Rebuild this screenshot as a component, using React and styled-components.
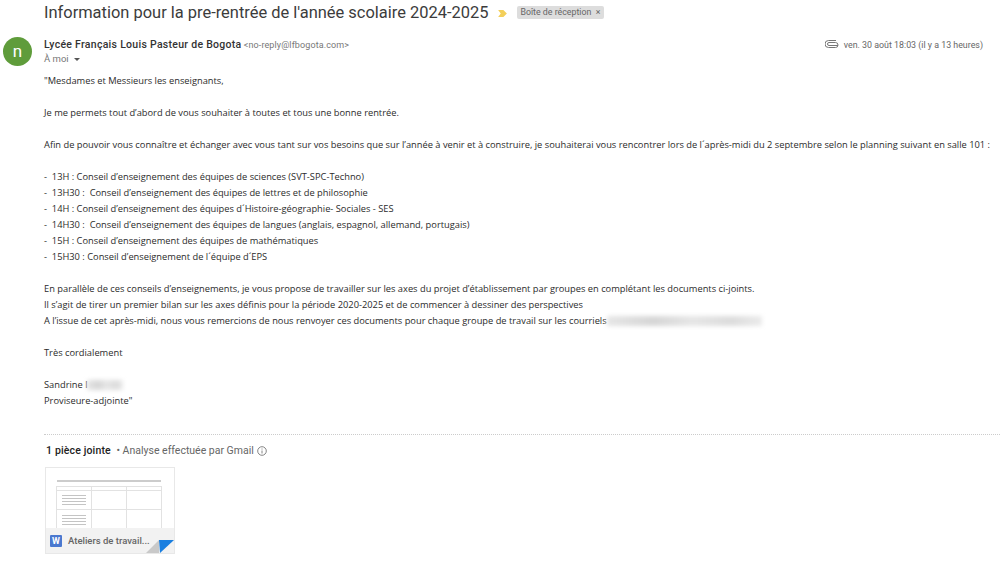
import React from 'react';
import styled, { createGlobalStyle } from 'styled-components';

const GlobalStyle = createGlobalStyle`
  html, body {
    margin: 0;
    padding: 0;
    background: #fff;
    overflow: hidden;
  }
`;

const Page = styled.div`
  width: 1000px;
  height: 566px;
  overflow: hidden;
  font-family: "Open Sans", sans-serif;
  color: #222;
`;

const SubjectRow = styled.div`
  display: flex;
  align-items: center;
  height: 24px;
  padding: 1px 0 0 44px;
`;

const Subject = styled.h1`
  margin: 0;
  font: 400 16.45px/24px Roboto, sans-serif;
  color: #3c3c3c;
`;

const Marker = styled.svg`
  width: 9px;
  height: 7px;
  margin-left: 10px;
`;

const Label = styled.span`
  display: flex;
  align-items: center;
  justify-content: space-between;
  box-sizing: border-box;
  width: 87px;
  height: 13px;
  margin: -2px 0 0 10px;
  padding: 0 4px 0 3px;
  border-radius: 2px;
  background: #dddddd;
  color: #666;
  white-space: nowrap;
  font: 400 8.8px/13px Roboto, sans-serif;
`;

const Header = styled.div`
  display: flex;
  height: 34px;
  margin-top: 11px;
  padding-left: 3px;
`;

const Avatar = styled.div`
  display: flex;
  align-items: center;
  justify-content: center;
  flex: none;
  width: 29px;
  height: 29px;
  margin-top: 1px;
  border-radius: 50%;
  background: #5f9c3b;
  color: #fff;
  font: 400 17px/29px Roboto, sans-serif;
`;

const SenderBlock = styled.div`
  margin-left: 12px;
  flex: 1;
`;

const SenderLine = styled.div`
  height: 15px;
  margin-top: 1px;
  font: 400 9px/15px Roboto, sans-serif;
  letter-spacing: 0.1px;
  color: #777;
`;

const SenderName = styled.strong`
  font: 500 10.5px/15px Roboto, sans-serif;
  letter-spacing: 0.28px;
  color: #333;
`;

const Recipient = styled.div`
  display: flex;
  align-items: center;
  gap: 5px;
  height: 14px;
  font: 400 9.5px/14px Roboto, sans-serif;
  color: #777;
`;

const Caret = styled.span`
  width: 0;
  height: 0;
  border-left: 3px solid transparent;
  border-right: 3px solid transparent;
  border-top: 3px solid #555;
`;

const Meta = styled.div`
  display: flex;
  align-items: center;
  gap: 5px;
  height: 15px;
  margin-top: 2px;
  padding-right: 17px;
  font: 400 8.85px/15px Roboto, sans-serif;
  color: #666;
`;

const Clip = styled.svg`
  width: 14px;
  height: 8px;
  margin-top: -4px;
`;

const Body = styled.div`
  padding-left: 44px;
  margin-top: 3px;
  font-size: 9.3px;
  line-height: 16px;
  color: #2b2b2b;
  white-space: pre;
`;

const Line = styled.div`
  display: flex;
  align-items: center;
  height: 16px;
  margin-top: ${(p) => (p.$gap ? '16px' : '0')};
`;

const Blur = styled.span`
  display: inline-block;
  width: ${(p) => p.$w}px;
  height: 10px;
  background: linear-gradient(90deg, #e6e6e6, #d6d6d6 30%, #e6e6e6 55%, #dcdcdc 80%, #ebebeb);
  filter: blur(2px);
`;

const Attachments = styled.section`
  margin: 25px 0 0 44px;
  border-top: 1px dotted #ccc;
`;

const AttachTitle = styled.div`
  display: flex;
  align-items: center;
  gap: 3px;
  height: 16px;
  margin-top: 8px;
  padding-left: 2px;
  font: 400 10.5px/16px Roboto, sans-serif;
  color: #666;
`;

const AttachCount = styled.strong`
  font-weight: 500;
  letter-spacing: 0.15px;
  color: #222;
`;

const Card = styled.div`
  position: relative;
  box-sizing: border-box;
  width: 130px;
  height: 87px;
  margin: 8px 0 0 1px;
  border: 1px solid #e8e8e8;
  background: #fff;
  overflow: hidden;
`;

const DocHeading = styled.div`
  margin: 12px 0 0 11px;
  width: 104px;
  height: 2px;
  background: #999;
  opacity: 0.5;
`;

const DocTable = styled.div`
  display: grid;
  grid-template-columns: 35px 35px 35px;
  grid-template-rows: 4px 19px 20px;
  width: 105px;
  margin: 4px 0 0 10px;
  border-top: 1px solid #e2e2e2;
  border-left: 1px solid #e2e2e2;
`;

const DocCell = styled.div`
  display: flex;
  flex-direction: column;
  align-items: center;
  justify-content: center;
  gap: 2px;
  box-sizing: border-box;
  border-right: 1px solid #e2e2e2;
  border-bottom: 1px solid #e2e2e2;
`;

const DocText = styled.span`
  display: block;
  width: 24px;
  height: 1px;
  background: #c4c4c4;
`;

const CardFooter = styled.div`
  position: absolute;
  left: 0;
  right: 0;
  bottom: 0;
  display: flex;
  align-items: center;
  gap: 6px;
  height: 25px;
  padding-left: 4px;
  background: #f2f2f2;
`;

const WordIcon = styled.span`
  flex: none;
  width: 12px;
  height: 12px;
  border-radius: 1px;
  background: #4a78cf;
  color: #fff;
  text-align: center;
  font: 700 9px/12px Roboto, sans-serif;
`;

const FileName = styled.span`
  font: 500 9.5px/14px Roboto, sans-serif;
  color: #666;
`;

const Corner = styled.svg`
  position: absolute;
  right: 0;
  bottom: 0;
  width: 28px;
  height: 14px;
`;

const lines = [
  { text: '"Mesdames et Messieurs les enseignants,' },
  { text: 'Je me permets tout d’abord de vous souhaiter à toutes et tous une bonne rentrée.', gap: true },
  { text: 'Afin de pouvoir vous connaître et échanger avec vous tant sur vos besoins que sur l’année à venir et à construire, je souhaiterai vous rencontrer lors de l´après-midi du 2 septembre selon le planning suivant en salle 101 :', gap: true },
  { text: '-  13H : Conseil d’enseignement des équipes de sciences (SVT-SPC-Techno)', gap: true },
  { text: '-  13H30 :  Conseil d’enseignement des équipes de lettres et de philosophie' },
  { text: '-  14H : Conseil d’enseignement des équipes d´Histoire-géographie- Sociales - SES' },
  { text: '-  14H30 :  Conseil d’enseignement des équipes de langues (anglais, espagnol, allemand, portugais)' },
  { text: '-  15H : Conseil d’enseignement des équipes de mathématiques' },
  { text: '-  15H30 : Conseil d’enseignement de l´équipe d´EPS' },
  { text: 'En parallèle de ces conseils d’enseignements, je vous propose de travailler sur les axes du projet d’établissement par groupes en complétant les documents ci-joints.', gap: true },
  { text: 'Il s’agit de tirer un premier bilan sur les axes définis pour la période 2020-2025 et de commencer à dessiner des perspectives' },
  { text: 'A l’issue de cet après-midi, nous vous remercions de nous renvoyer ces documents pour chaque groupe de travail sur les courriels', blur: 155 },
  { text: 'Très cordialement', gap: true },
  { text: 'Sandrine l', blur: 36, gap: true },
  { text: 'Proviseure-adjointe"' },
];

const docRow = (
  <>
    <DocCell><DocText /><DocText /><DocText /><DocText /></DocCell>
    <DocCell />
    <DocCell />
  </>
);

export default function App() {
  return (
    <Page>
      <GlobalStyle />
      <SubjectRow>
        <Subject>Information pour la pre-rentrée de l'année scolaire 2024-2025</Subject>
        <Marker viewBox="0 0 10 8">
          <path d="M0 0h6l4 4-4 4H0l3-4z" fill="#f3cf5a" />
        </Marker>
        <Label>Boîte de réception <span>×</span></Label>
      </SubjectRow>
      <Header>
        <Avatar>n</Avatar>
        <SenderBlock>
          <SenderLine>
            <SenderName>Lycée Français Louis Pasteur de Bogota</SenderName> &lt;no-reply@lfbogota.com&gt;
          </SenderLine>
          <Recipient>À moi <Caret /></Recipient>
        </SenderBlock>
        <Meta>
          <Clip viewBox="0 0 14 8" fill="none" stroke="#777" strokeWidth="1">
            <path d="M13 5.500H4a1.500 1.500 0 0 1 0-3h6.500a2 2 0 0 1 0 5H3.500a3 3 0 0 1 0-7H11" />
          </Clip>
          ven. 30 août 18:03 (il y a 13 heures)
        </Meta>
      </Header>
      <Body>
        {lines.map((line) => (
          <Line key={line.text} $gap={line.gap}>
            {line.text}
            {line.blur && <Blur $w={line.blur} />}
          </Line>
        ))}
      </Body>
      <Attachments>
        <AttachTitle>
          <AttachCount>1 pièce jointe</AttachCount>
          <span>&nbsp;• Analyse effectuée par Gmail</span>
          <svg width="10" height="10" viewBox="0 0 10 10" fill="none" stroke="#666" strokeWidth="0.8">
            <circle cx="5" cy="5" r="4.300" />
            <path d="M5 4.500v3M5 2.500v1" />
          </svg>
        </AttachTitle>
        <Card>
          <DocHeading />
          <DocTable>
            <DocCell /><DocCell /><DocCell />
            {docRow}
            {docRow}
          </DocTable>
          <CardFooter>
            <WordIcon>W</WordIcon>
            <FileName>Ateliers de travail...</FileName>
          </CardFooter>
          <Corner viewBox="0 0 28 14">
            <path d="M0 14 13 1v13z" fill="#c9c9c9" />
            <path d="M13 1h15L14 14z" fill="#1a7fe0" />
          </Corner>
        </Card>
      </Attachments>
    </Page>
  );
}
